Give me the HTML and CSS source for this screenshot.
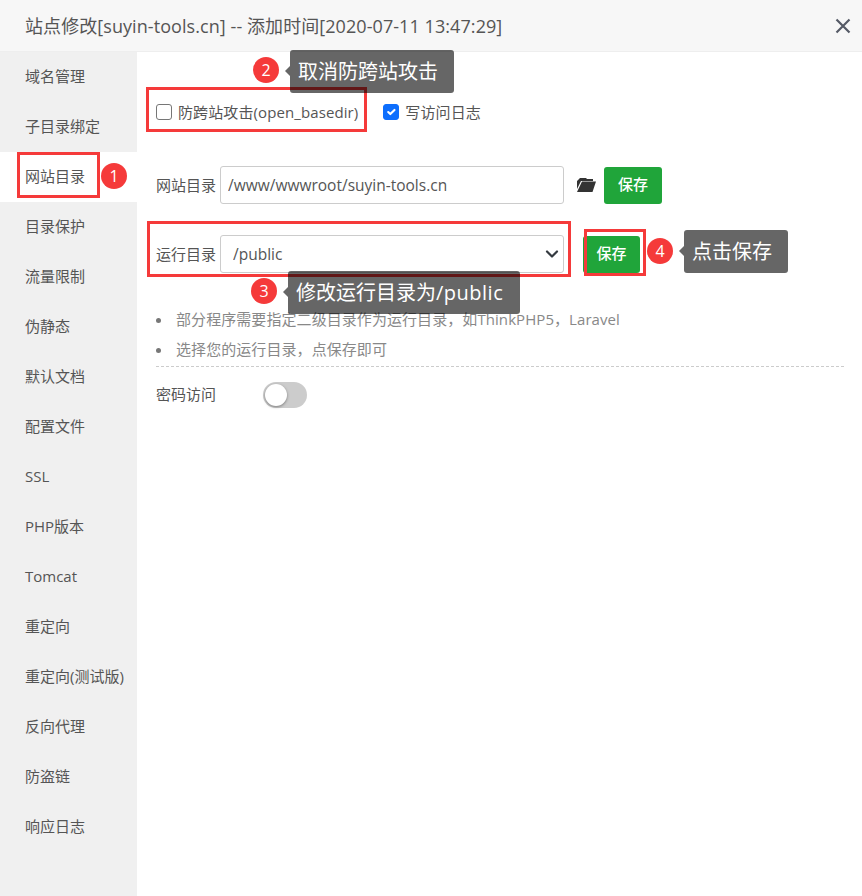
FILE: index.html
```html
<!DOCTYPE html>
<html lang="zh">
<head>
<meta charset="utf-8">
<title>站点修改</title>
<link rel="stylesheet" href="styles.css">
</head>
<body>
<div class="dialog">
  <header class="head">
    <span class="title">站点修改[suyin-tools.cn] -- 添加时间[2020-07-11 13:47:29]</span>
    <svg class="close" width="16" height="16" viewBox="0 0 16 16"><path d="M1.5 1.5l13 13M14.5 1.5l-13 13" stroke="#555a66" stroke-width="2.2" fill="none"/></svg>
  </header>
  <div class="body">
    <nav class="side">
      <a class="item">域名管理</a>
      <a class="item">子目录绑定</a>
      <a class="item active">网站目录</a>
      <a class="item">目录保护</a>
      <a class="item">流量限制</a>
      <a class="item">伪静态</a>
      <a class="item">默认文档</a>
      <a class="item">配置文件</a>
      <a class="item">SSL</a>
      <a class="item">PHP版本</a>
      <a class="item">Tomcat</a>
      <a class="item">重定向</a>
      <a class="item">重定向(测试版)</a>
      <a class="item">反向代理</a>
      <a class="item">防盗链</a>
      <a class="item">响应日志</a>
    </nav>
    <main class="main">
      <div class="checks">
        <label class="check"><input type="checkbox" class="box"><span class="check-text">防跨站攻击(open_basedir)</span></label>
        <label class="check"><input type="checkbox" class="box" checked><span class="check-text">写访问日志</span></label>
      </div>
      <div class="row row-dir">
        <span class="label">网站目录</span>
        <input class="field" type="text" value="/www/wwwroot/suyin-tools.cn">
        <svg class="folder" width="19" height="14" viewBox="0 0 19 14"><path fill="#333" d="M3 0h6l1 1h6v2H4L0 11V3zM5 3.6h14l-3.5 10.4H0z"/></svg>
        <button class="btn">保存</button>
      </div>
      <div class="row row-run">
        <span class="label">运行目录</span>
        <select class="field select"><option>/public</option></select>
        <button class="btn btn-run">保存</button>
      </div>
      <ul class="tips">
        <li class="tip-line">部分程序需要指定二级目录作为运行目录，如ThinkPHP5，Laravel</li>
        <li class="tip-line">选择您的运行目录，点保存即可</li>
      </ul>
      <div class="row row-pass">
        <span class="label label-pass">密码访问</span>
        <span class="toggle"><span class="knob"></span></span>
      </div>
    </main>
  </div>
</div>

<div class="mark mark-side"></div>
<div class="mark mark-check"></div>
<div class="mark mark-run"></div>
<div class="mark mark-save"></div>

<span class="num num1">1</span>
<span class="num num2">2</span>
<span class="num num3">3</span>
<span class="num num4">4</span>

<div class="tip tip2">取消防跨站攻击</div>
<div class="tip tip3">修改运行目录为<span class="latin">/public</span></div>
<div class="tip tip4">点击保存</div>
</body>
</html>
```
FILE: styles.css
```css
* { box-sizing: border-box; }
html, body { margin: 0; padding: 0; background: #fff; }
body {
  position: relative;
  width: 862px;
  height: 896px;
  overflow: hidden;
  font-family: "Open Sans", "Noto Sans CJK SC", sans-serif;
  font-size: 15px;
  color: #666;
}
.dialog { display: flex; flex-direction: column; height: 896px; }
.head {
  height: 52px;
  flex: none;
  display: flex;
  align-items: center;
  justify-content: space-between;
  padding: 0 11px 0 25px;
  background: #f7f7f7;
  border-bottom: 1px solid #eee;
}
.title { font-size: 18px; color: #555; letter-spacing: .07px; margin-bottom: 2px; }
.close { display: block; }
.body { flex: 1; display: flex; min-height: 0; }
.side { width: 137px; flex: none; background: #f0f0f0; }
.item { display: block; height: 50px; line-height: 49px; padding-left: 25px; color: #555; font-size: 15px; white-space: nowrap; }
.item.active { background: #fff; }
.main { flex: 1; padding: 45px 18px 0 19px; }
.checks { display: flex; height: 30px; align-items: center; gap: 25px; }
.check { display: flex; align-items: center; color: #555; font-size: 15px; }
.check-text { margin-bottom: 2px; letter-spacing: .1px; }
.box {
  appearance: none;
  flex: none;
  width: 16px;
  height: 16px;
  margin: 0 6px 0 0;
  border: 1px solid #767676;
  border-radius: 3px;
  background: #fff;
}
.box:checked {
  border-color: #0d6efd;
  background: #0d6efd url("data:image/svg+xml,%3Csvg xmlns='http://www.w3.org/2000/svg' viewBox='0 0 20 20'%3E%3Cpath fill='none' stroke='%23fff' stroke-linecap='round' stroke-linejoin='round' stroke-width='3' d='m6 10 3 3 6-6'/%3E%3C/svg%3E") center / 100% 100% no-repeat;
}
.row { display: flex; align-items: center; }
.row-dir { margin-top: 39px; height: 38px; }
.row-run { margin-top: 31px; height: 38px; }
.label { width: 64px; flex: none; font-size: 15px; color: #555; padding-bottom: 2px; }
.field {
  width: 344px;
  height: 38px;
  flex: none;
  border: 1px solid #ccc;
  border-radius: 3px;
  padding: 0 7px;
  font-family: inherit;
  font-size: 15.5px;
  color: #555;
  background: #fff;
}
.select {
  appearance: none;
  padding: 0 12px;
  background: #fff url("data:image/svg+xml,%3Csvg xmlns='http://www.w3.org/2000/svg' viewBox='0 0 16 16'%3E%3Cpath fill='none' stroke='%23343a40' stroke-linecap='round' stroke-linejoin='round' stroke-width='2.2' d='m3 5.5 5 5 5-5'/%3E%3C/svg%3E") right 3px center / 16px 16px no-repeat;
}
.folder { margin: 0 8px 0 13px; flex: none; }
.btn {
  width: 58px;
  height: 37px;
  border: 0;
  border-radius: 3px;
  background: #20a53a;
  color: #fff;
  font-family: inherit;
  font-size: 15px;
  font-weight: 500;
  padding: 0 0 3px;
}
.btn-run { margin-left: 19px; width: 57px; }
.tips { margin: 32px 0 0; padding: 0; list-style: none; border-bottom: 1px dashed #ccc; height: 62px; color: #888; font-size: 15px; line-height: 28px; letter-spacing: .07px; }
.tip-line { display: flex; align-items: flex-start; height: 30px; }
.tip-line::before { content: ""; flex: none; align-self: center; width: 5px; height: 5px; margin-right: 15px; border-radius: 50%; background: #777; }
.row-pass { margin-top: 14px; height: 27px; }
.label-pass { width: 107px; }
.toggle { display: block; position: relative; width: 44px; height: 26px; border-radius: 13px; background: #ccc; }
.knob { position: absolute; left: 2px; top: 2px; width: 22px; height: 22px; border-radius: 50%; background: #fff; box-shadow: 0 1px 3px rgba(0,0,0,.4); }

.mark { position: absolute; border: 3px solid #f53a3a; }
.mark-side { left: 17px; top: 152px; width: 83px; height: 46px; }
.mark-check { left: 146px; top: 87px; width: 221px; height: 45px; }
.mark-run { left: 147px; top: 221px; width: 424px; height: 56px; }
.mark-save { left: 584px; top: 229px; width: 62px; height: 47px; }

.num {
  position: absolute;
  width: 26px;
  height: 26px;
  border-radius: 50%;
  background: #f53a3a;
  color: #fff;
  font-size: 16px;
  line-height: 26px;
  text-align: center;
}
.num1 { left: 101px; top: 163px; }
.num2 { left: 253px; top: 57px; }
.num3 { left: 251px; top: 278px; }
.num4 { left: 647px; top: 238px; }

.tip {
  position: absolute;
  height: 43px;
  padding: 0 8px;
  border-radius: 3px;
  background: rgba(0,0,0,.6);
  color: #fff;
  font-size: 20px;
  line-height: 43px;
  white-space: nowrap;
}
.tip::before {
  content: "";
  position: absolute;
  left: -5px;
  top: 16px;
  border-style: solid;
  border-width: 5px 5px 5px 0;
  border-color: transparent rgba(0,0,0,.6) transparent transparent;
}
.latin { letter-spacing: .5px; }
.tip2 { left: 290px; top: 50px; width: 164px; }
.tip3 { left: 288px; top: 271px; width: 232px; }
.tip4 { left: 684px; top: 230px; width: 104px; }
```
